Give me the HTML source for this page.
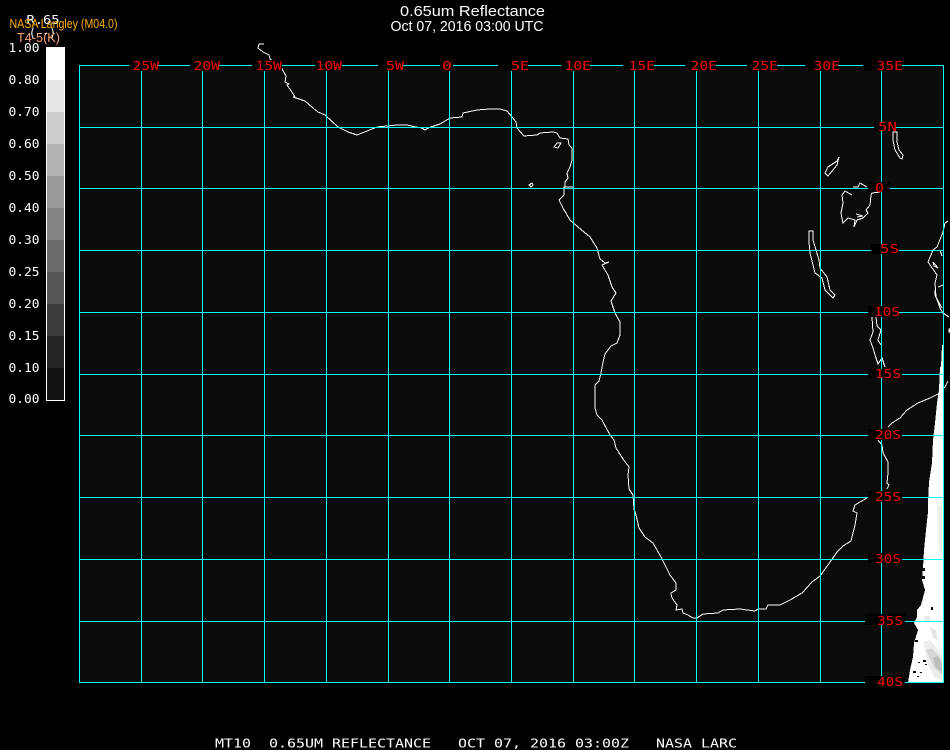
<!DOCTYPE html>
<html><head><meta charset="utf-8"><title>0.65um Reflectance</title>
<style>
html,body{margin:0;padding:0;background:#000;width:950px;height:750px;overflow:hidden}
svg{display:block;position:absolute;left:0;top:0}
.m{font-family:"DejaVu Sans Mono","Liberation Mono",monospace;font-size:12px;white-space:pre}
.r text{fill:#ff0000}
.w text{fill:#ffffff}
.s{font-family:"Liberation Sans",sans-serif}
</style></head><body>
<svg width="950" height="750" viewBox="0 0 950 750" xmlns="http://www.w3.org/2000/svg">
<rect width="950" height="750" fill="#000"/>
<!-- colour bar -->
<g shape-rendering="crispEdges">
<rect x="46" y="47" width="19" height="354" fill="#fff"/>
<rect x="47" y="47" width="17" height="33" fill="#fff"/>
<rect x="47" y="80" width="17" height="32" fill="#e6e6e6"/>
<rect x="47" y="112" width="17" height="32" fill="#cccccc"/>
<rect x="47" y="144" width="17" height="32" fill="#b2b2b2"/>
<rect x="47" y="176" width="17" height="32" fill="#999999"/>
<rect x="47" y="208" width="17" height="32" fill="#858585"/>
<rect x="47" y="240" width="17" height="32" fill="#6b6b6b"/>
<rect x="47" y="272" width="17" height="32" fill="#555555"/>
<rect x="47" y="304" width="17" height="32" fill="#3c3c3c"/>
<rect x="47" y="336" width="17" height="32" fill="#242424"/>
<rect x="47" y="368" width="17" height="32" fill="#111111"/>
<!-- map background -->
<rect x="80" y="66" width="863" height="617" fill="#0b0b0b"/>
<!-- satellite data -->
<polygon fill="#fff" points="943,345 942,345 941,367 940,367 939,390 937,403 935,423 933,440 932,463 929,482 928,503 928,512 926,530 924,550 923,568 922,580 925,590 921,605 917,610 917,617 914,623 918,630 914,643 913,657 910,670 908,683 943,683"/>
<polygon fill="#eeeeee" points="937,505 942,505 942,555 939,552 938,530"/>
<polygon fill="#e6e6e6" points="930,627 936,630 938,640 933,638"/>
<polygon fill="#ececec" points="923,642 930,640 942,655 942,680 935,678 928,665"/>
<polygon fill="#d6d6d6" points="926,650 932,648 942,660 942,675 934,668"/>
<polygon fill="#bcbcbc" points="933,658 938,656 942,664 942,672 936,668"/>
<polygon fill="#e8e8e8" points="924,616 930,616 930,622 925,621"/>
<g fill="#0b0b0b">
<rect x="931" y="607" width="2" height="3"/><rect x="923" y="660" width="3" height="2"/><rect x="918" y="662" width="2" height="1"/>
<rect x="925" y="664" width="2" height="1"/><rect x="913" y="671" width="3" height="2"/><rect x="920" y="672" width="2" height="1"/>
<rect x="915" y="640" width="3" height="2"/><rect x="922" y="576" width="3" height="3"/><rect x="921" y="568" width="4" height="3"/>
<rect x="917" y="676" width="2" height="1"/><rect x="912" y="634" width="4" height="2"/>
</g>
<!-- coastlines -->
<g fill="none" stroke="#fff" stroke-width="1">
<polyline points="264,44 259,44 258,48 263,52 269,55 270,59 281,67 286,76 285,82 289,84 287,85 292,92 295,97 293,97 305,101 313,108 318,112 325,115 338,127 348,132 357,135 367,131 377,127 387,126 397,125 407,125 416,127 422,128 425,130 428,128 440,124 450,118 462,117 463,113 477,110 490,109 500,109 507,111 512,117 516,122 517,128 524,136 537,135 540,133 553,132 557,133 560,138 568,139 569,145 572,148 572,160 570,167 567,173 568,178 565,182 565,187 573,187 564,187 564,195 559,200 563,208 570,220 578,227 590,237 597,248 598,252 600,259 605,263 609,262 602,265 608,275 612,287 616,293 611,301 615,313 620,322 620,335 617,343 611,346 605,354 603,362 601,373 599,381 595,385 595,408 597,415 602,420 603,422 610,435 614,440 616,448 623,459 629,467 628,475 629,489 633,495 634,509 636,515 639,528 645,537 653,543 661,557 670,575 676,583 676,590 671,593 672,598 677,605 676,610 682,609 683,613 688,615 693,618 697,618 703,614 718,613 723,610 740,609 755,611 758,609 766,609 768,605 780,605 790,600 802,593 812,582 820,576 828,565 837,552 843,546 851,541 855,525 857,513 853,511 855,505 860,502 867,498"/>
<polygon points="557,143 561,143 558,148 554,147"/>
<polygon points="532,183 533,185 531,187 529,185"/>
<polygon points="893,132 897,132 897,142 899,150 903,155 902,159 900,158 895,150 893,140"/>
<polygon points="839,157 837,165 828,176 825,173 828,167 837,161"/>
<polyline points="853,187 858,187 860,183 867,187"/>
<polyline points="880,192 872,193 871,195 870,205 866,210 868,213 863,218 857,220 854,227 855,220 848,218 843,223 841,213 843,203 842,195 845,191 852,195"/>
<polyline points="856,214 863,216 857,217"/>
<polygon points="809,231 813,231 813,240 816,250 819,260 820,268 827,277 830,290 835,295 833,298 825,290 822,278 815,273 813,265 810,253 809,242"/>
<polyline points="948,221 945,223 943,232 937,247 933,250 928,262 937,275 935,283 936,297 942,308"/>
<polyline points="933,262 938,268 934,266 933,262"/>
<polyline points="943,285 938,287"/>
<polyline points="940,250 942,256"/>
<polyline points="869,307 872,317 873,332 870,340 873,348 876,358 878,364 882,358 885,367"/>
<polyline points="876,317 877,326 881,330 878,340 881,345"/>
<polyline points="935,290 935,295 938,302 940,308 943,313 949,317"/>
<rect x="949" y="329" width="1" height="3"/>
<polyline points="948,381 945,387 938,394 930,398 918,403 907,410 900,418 892,423 888,427"/>
<polyline points="877,439 882,445 883,453 888,462 888,473 887,483 889,485 887,489"/>
</g>
<!-- grid -->
<g fill="#00ffff">
<rect x="79" y="65" width="865" height="1"/>
<rect x="79" y="127" width="865" height="1"/>
<rect x="79" y="188" width="865" height="1"/>
<rect x="79" y="250" width="865" height="1"/>
<rect x="79" y="312" width="865" height="1"/>
<rect x="79" y="374" width="865" height="1"/>
<rect x="79" y="435" width="865" height="1"/>
<rect x="79" y="497" width="865" height="1"/>
<rect x="79" y="559" width="865" height="1"/>
<rect x="79" y="621" width="865" height="1"/>
<rect x="79" y="682" width="865" height="1"/>
<rect x="79" y="65" width="1" height="618"/>
<rect x="141" y="65" width="1" height="618"/>
<rect x="202" y="65" width="1" height="618"/>
<rect x="264" y="65" width="1" height="618"/>
<rect x="326" y="65" width="1" height="618"/>
<rect x="388" y="65" width="1" height="618"/>
<rect x="449" y="65" width="1" height="618"/>
<rect x="511" y="65" width="1" height="618"/>
<rect x="573" y="65" width="1" height="618"/>
<rect x="634" y="65" width="1" height="618"/>
<rect x="696" y="65" width="1" height="618"/>
<rect x="758" y="65" width="1" height="618"/>
<rect x="820" y="65" width="1" height="618"/>
<rect x="881" y="65" width="1" height="618"/>
<rect x="943" y="65" width="1" height="618"/>
</g>
<!-- label boxes -->
<g fill="#000">
<rect x="129" y="60" width="29" height="11"/>
<rect x="190" y="60" width="29" height="11"/>
<rect x="252" y="60" width="30" height="11"/>
<rect x="315" y="60" width="27" height="11"/>
<rect x="378" y="60" width="25" height="11"/>
<rect x="440" y="60" width="13" height="11"/>
<rect x="498" y="60" width="30" height="11"/>
<rect x="561" y="60" width="29" height="11"/>
<rect x="623" y="60" width="31" height="11"/>
<rect x="685" y="60" width="31" height="11"/>
<rect x="747" y="60" width="30" height="11"/>
<rect x="805" y="60" width="33" height="11"/>
<rect x="863" y="60" width="39" height="11"/>
<rect x="874" y="122" width="22" height="9"/>
<rect x="868" y="182" width="22" height="10"/>
<rect x="871" y="244" width="28" height="10"/>
<rect x="868" y="306" width="31" height="11"/>
<rect x="868" y="369" width="34" height="9"/>
<rect x="868" y="429" width="34" height="11"/>
<rect x="868" y="491" width="34" height="11"/>
<rect x="868" y="553" width="34" height="10"/>
<rect x="865" y="614" width="40" height="11"/>
<rect x="865" y="676" width="40" height="7"/>
</g>
</g>
<!-- red labels -->
<g class="m r">
<text x="132.5" y="70" textLength="26.5" lengthAdjust="spacingAndGlyphs">25W</text>
<text x="193.5" y="70" textLength="26.5" lengthAdjust="spacingAndGlyphs">20W</text>
<text x="255.5" y="70" textLength="26.5" lengthAdjust="spacingAndGlyphs">15W</text>
<text x="315.5" y="70" textLength="26.5" lengthAdjust="spacingAndGlyphs">10W</text>
<text x="386" y="70" textLength="18" lengthAdjust="spacingAndGlyphs">5W</text>
<text x="442" y="70" textLength="10" lengthAdjust="spacingAndGlyphs">0</text>
<text x="511" y="70" textLength="18" lengthAdjust="spacingAndGlyphs">5E</text>
<text x="564.5" y="70" textLength="26.5" lengthAdjust="spacingAndGlyphs">10E</text>
<text x="628.5" y="70" textLength="26.5" lengthAdjust="spacingAndGlyphs">15E</text>
<text x="690.5" y="70" textLength="26.5" lengthAdjust="spacingAndGlyphs">20E</text>
<text x="751.5" y="70" textLength="26.5" lengthAdjust="spacingAndGlyphs">25E</text>
<text x="813.5" y="70" textLength="26.5" lengthAdjust="spacingAndGlyphs">30E</text>
<text x="876.5" y="70" textLength="26.5" lengthAdjust="spacingAndGlyphs">35E</text>
<text x="878" y="131" textLength="19" lengthAdjust="spacingAndGlyphs">5N</text>
<text x="875" y="192" textLength="9" lengthAdjust="spacingAndGlyphs">0</text>
<text x="880" y="253" textLength="19" lengthAdjust="spacingAndGlyphs">5S</text>
<text x="874" y="316" textLength="26" lengthAdjust="spacingAndGlyphs">10S</text>
<text x="875" y="378" textLength="26" lengthAdjust="spacingAndGlyphs">15S</text>
<text x="875" y="439" textLength="26" lengthAdjust="spacingAndGlyphs">20S</text>
<text x="875" y="501" textLength="26" lengthAdjust="spacingAndGlyphs">25S</text>
<text x="875" y="563" textLength="26" lengthAdjust="spacingAndGlyphs">30S</text>
<text x="877" y="625" textLength="26" lengthAdjust="spacingAndGlyphs">35S</text>
<text x="877" y="686" textLength="26" lengthAdjust="spacingAndGlyphs">40S</text>
</g>
<!-- colour bar labels -->
<g class="m w">
<text x="26.5" y="24" textLength="33" lengthAdjust="spacingAndGlyphs">R.65</text>
<text x="29" y="37" textLength="27" lengthAdjust="spacingAndGlyphs">(--)</text>
<text x="8.5" y="52" textLength="31" lengthAdjust="spacingAndGlyphs">1.00</text>
<text x="8.5" y="84" textLength="31" lengthAdjust="spacingAndGlyphs">0.80</text>
<text x="8.5" y="116" textLength="31" lengthAdjust="spacingAndGlyphs">0.70</text>
<text x="8.5" y="148" textLength="31" lengthAdjust="spacingAndGlyphs">0.60</text>
<text x="8.5" y="180" textLength="31" lengthAdjust="spacingAndGlyphs">0.50</text>
<text x="8.5" y="212" textLength="31" lengthAdjust="spacingAndGlyphs">0.40</text>
<text x="8.5" y="244" textLength="31" lengthAdjust="spacingAndGlyphs">0.30</text>
<text x="8.5" y="276" textLength="31" lengthAdjust="spacingAndGlyphs">0.25</text>
<text x="8.5" y="308" textLength="31" lengthAdjust="spacingAndGlyphs">0.20</text>
<text x="8.5" y="340" textLength="31" lengthAdjust="spacingAndGlyphs">0.15</text>
<text x="8.5" y="372" textLength="31" lengthAdjust="spacingAndGlyphs">0.10</text>
<text x="8.5" y="403" textLength="31" lengthAdjust="spacingAndGlyphs">0.00</text>
<text x="215" y="747.5" textLength="522" lengthAdjust="spacingAndGlyphs" xml:space="preserve">MT10  0.65UM REFLECTANCE   OCT 07, 2016 03:00Z   NASA LARC</text>
</g>
<!-- titles -->
<text class="s" x="400" y="16" font-size="15" fill="#fff" textLength="145" lengthAdjust="spacingAndGlyphs">0.65um Reflectance</text>
<text class="s" x="390.5" y="31" font-size="14.5" fill="#fff" textLength="153" lengthAdjust="spacingAndGlyphs">Oct 07, 2016 03:00 UTC</text>
<text class="s" x="9.5" y="28" font-size="12.5" fill="#ffb000" textLength="108" lengthAdjust="spacingAndGlyphs">NASA Langley (M04.0)</text>
<text class="s" x="17" y="42" font-size="12.5" fill="#ffa57a" textLength="43" lengthAdjust="spacingAndGlyphs">T4-5(K)</text>
</svg>
</body></html>
